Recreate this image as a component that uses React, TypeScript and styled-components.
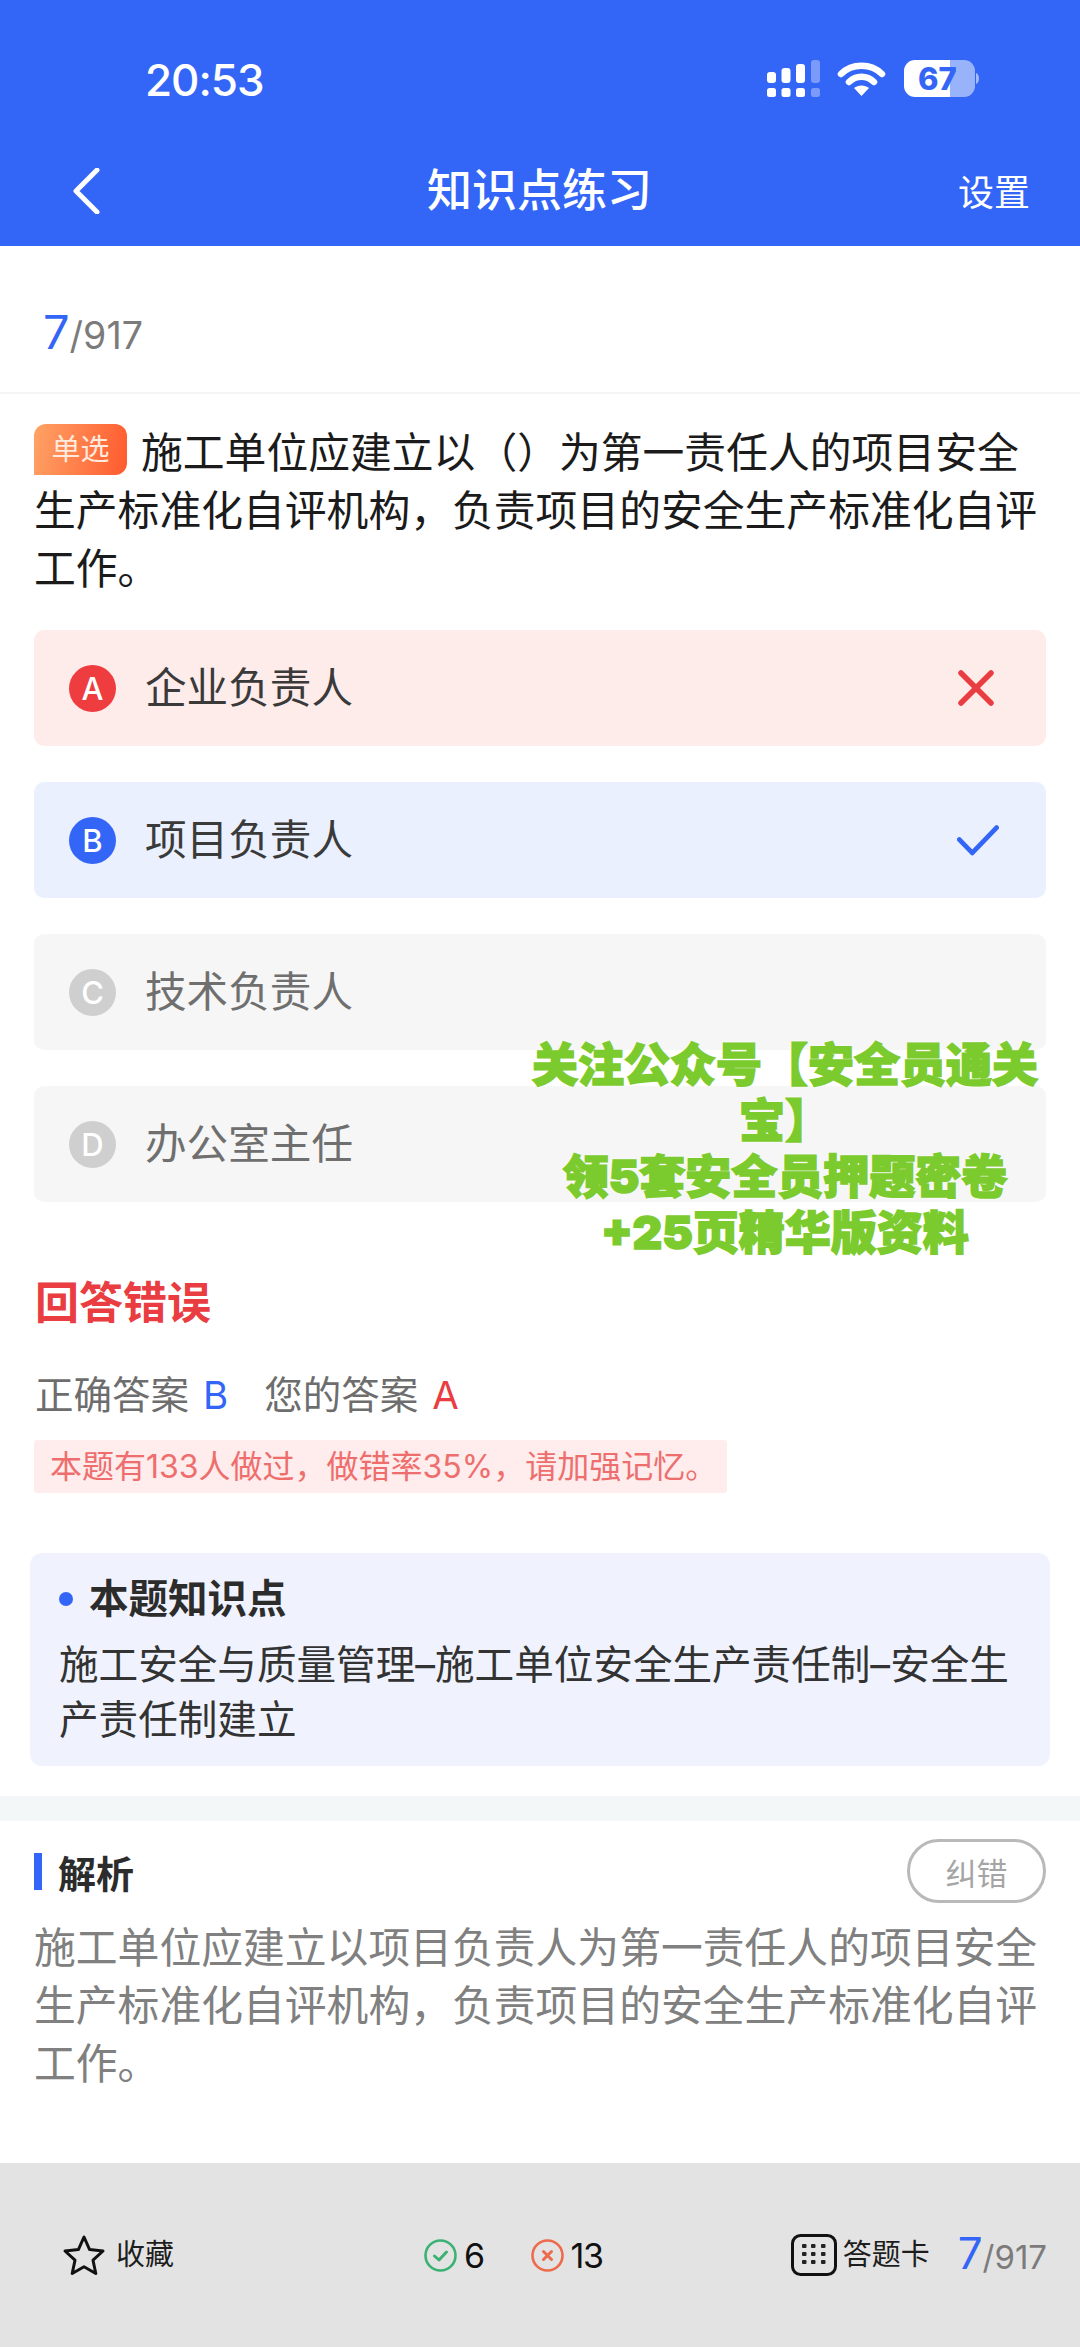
import React from "react";
import styled, { createGlobalStyle } from "styled-components";

const FONT = `Inter, "Noto Sans CJK SC", sans-serif`;
const BLUE = "#3366f6";
const RED = "#e93d41";

const Global = createGlobalStyle`
  html, body { margin: 0; padding: 0; background: #fff; }
  body { font-family: ${FONT}; text-spacing-trim: space-all; }
  * { box-sizing: border-box; }
`;

const Page = styled.div`
  position: relative;
  width: 1080px;
  height: 2347px;
  overflow: hidden;
  display: flex;
  flex-direction: column;
  background: #fff;
`;

const Header = styled.header`
  height: 246px;
  padding-top: 40px;
  background: ${BLUE};
  color: #fff;
`;

const StatusBar = styled.div`
  height: 80px;
  margin-bottom: 21px;
  padding-left: 145px;
  display: flex;
  align-items: center;
`;

const Clock = styled.div`
  width: 622px;
  font-size: 44px;
  font-weight: 500;
  letter-spacing: -1px;
  line-height: 80px;
`;

const StatusIcons = styled.svg`
  display: block;
  width: 213px;
  height: 50px;
  flex: none;
`;

const BatteryText = styled.text`
  font-family: ${FONT};
  font-size: 31px;
  font-weight: 800;
  fill: ${BLUE};
`;

const Nav = styled.nav`
  height: 100px;
  padding: 0 50px 0 72px;
  display: flex;
  align-items: center;
`;

const BackIcon = styled.svg`
  width: 28px;
  height: 46px;
  flex: none;
`;

const NavTitle = styled.h1`
  width: 224px;
  margin: 0 0 0 327px;
  font-size: 45px;
  font-weight: 500;
  line-height: 60px;
  white-space: nowrap;
`;

const NavAction = styled.div`
  margin-left: auto;
  font-size: 36px;
  line-height: 60px;
  position: relative;
  top: 2px;
`;

const CounterRow = styled.div`
  height: 148px;
  padding: 56px 0 0 43px;
  border-bottom: 2px solid #f4f5f6;
`;

const Counter = styled.div<{ $size: number; $cur: number }>`
  display: inline-flex;
  align-items: baseline;
  color: #7b7b7b;
  font-size: ${(p) => p.$size}px;
  line-height: 60px;
  b {
    font-weight: 400;
    font-size: ${(p) => p.$cur}px;
    color: ${BLUE};
  }
`;

const Question = styled.div`
  margin: 30px 34px 0;
  font-size: 41.8px;
  line-height: 58px;
  color: #1b1b1b;
`;

const Tag = styled.span`
  display: inline-block;
  width: 93px;
  height: 51px;
  margin-right: 14px;
  border-radius: 12px 12px 12px 0;
  background: linear-gradient(100deg, #ffa366, #ff5a2e);
  color: #ffeadd;
  font-size: 29px;
  line-height: 51px;
  text-align: center;
  vertical-align: 8px;
`;

const Options = styled.div`
  margin: 32px 34px 0;
  display: flex;
  flex-direction: column;
  gap: 36px;
`;

type Tone = "wrong" | "right" | "idle";
const optionBg = { wrong: "#feeceb", right: "#ebf0fe", idle: "#f6f6f6" };
const optionDot = { wrong: "#ee3c3f", right: BLUE, idle: "#cfcfcf" };
const optionText = { wrong: "#3a3a3a", right: "#3a3a3a", idle: "#6f6f6f" };

const Option = styled.div<{ $tone: Tone }>`
  height: 116px;
  padding: 0 47px 0 35px;
  display: flex;
  align-items: center;
  border-radius: 10px;
  background: ${(p) => optionBg[p.$tone]};
  color: ${(p) => optionText[p.$tone]};
`;

const OptionDot = styled.span<{ $tone: Tone }>`
  width: 47px;
  height: 47px;
  flex: none;
  border-radius: 50%;
  background: ${(p) => optionDot[p.$tone]};
  color: #fff;
  font-size: 31px;
  font-weight: 500;
  line-height: 47px;
  text-align: center;
`;

const OptionLabel = styled.span`
  flex: 1;
  margin-left: 29px;
  font-size: 41.6px;
  line-height: 58px;
`;

const WrongMark = styled.svg`
  width: 36px;
  height: 36px;
  margin-right: 5px;
`;

const RightMark = styled.svg`
  width: 42px;
  height: 31px;
`;

const ResultTitle = styled.div`
  margin: 72px 35px 0;
  color: ${RED};
  font-size: 44px;
  font-weight: 700;
  line-height: 58px;
`;

const AnswerRow = styled.div`
  margin: 36px 35px 0;
  display: flex;
  color: #6d6d6d;
  font-size: 38.5px;
  line-height: 54px;
`;

const AnswerPart = styled.span`
  margin-right: 36px;
`;

const AnswerLetter = styled.span<{ $color: string }>`
  margin-left: 14px;
  color: ${(p) => p.$color};
`;

const StatBand = styled.div`
  width: 693px;
  height: 53px;
  margin: 18px 0 0 34px;
  padding-left: 16px;
  background: #ffecec;
  color: #ee6e6e;
  font-size: 32px;
  line-height: 53px;
  white-space: nowrap;
  border-radius: 3px;
`;

const KnowledgeCard = styled.section`
  height: 213px;
  margin: 60px 30px 0;
  padding: 20px 29px 0;
  border-radius: 12px;
  background: #f0f3fe;
`;

const KnowledgeTitle = styled.div`
  display: flex;
  align-items: center;
  color: #2c2c2c;
  font-size: 39.5px;
  font-weight: 700;
  line-height: 52px;
`;

const Dot = styled.span`
  width: 14px;
  height: 14px;
  margin-right: 16px;
  border-radius: 50%;
  background: ${BLUE};
`;

const KnowledgeBody = styled.div`
  margin-top: 13px;
  color: #333;
  font-size: 39.6px;
  line-height: 55px;
`;

const SectionGap = styled.div`
  height: 25px;
  margin-top: 30px;
  background: #f4f7f7;
`;

const Analysis = styled.section`
  flex: 1;
  padding: 18px 34px 0;
`;

const AnalysisHead = styled.div`
  height: 64px;
  display: flex;
  align-items: center;
  justify-content: space-between;
`;

const AnalysisTitle = styled.div`
  height: 37px;
  padding-left: 16px;
  display: flex;
  align-items: center;
  border-left: 8px solid ${BLUE};
  color: #2c2c2c;
  font-size: 38px;
  font-weight: 700;
`;

const ReportButton = styled.button`
  width: 139px;
  height: 64px;
  padding: 0;
  border: 3px solid #b9b9b9;
  border-radius: 32px;
  background: transparent;
  color: #a5a5a5;
  font-family: ${FONT};
  font-size: 31px;
`;

const AnalysisBody = styled.div`
  margin-top: 16px;
  color: #808080;
  font-size: 41.8px;
  line-height: 58px;
`;

const Footer = styled.footer`
  height: 184px;
  padding: 0 33px 0 62px;
  display: flex;
  align-items: center;
  background: #e3e3e3;
`;

const FooterLeft = styled.div`
  width: 362px;
  display: flex;
  align-items: center;
  gap: 10px;
`;

const FooterMid = styled.div`
  flex: 1;
  display: flex;
  align-items: center;
`;

const FooterRight = styled.div`
  display: flex;
  align-items: center;
`;

const FooterText = styled.span`
  color: #1d1d1d;
  font-size: 29px;
  line-height: 44px;
  white-space: nowrap;
`;

const CardLabel = styled(FooterText)`
  margin-left: 6px;
`;

const Stat = styled.span<{ $gap?: number }>`
  display: flex;
  align-items: center;
  gap: 7px;
  margin-right: ${(p) => p.$gap ?? 0}px;
  color: #111;
  font-size: 34px;
  letter-spacing: -1.5px;
`;

const FooterCounter = styled.div`
  margin-left: 28px;
`;

const Promo = styled.div`
  position: absolute;
  left: 520px;
  top: 1036px;
  width: 530px;
  text-align: center;
  color: #7ccb2e;
  font-size: 46px;
  font-weight: 900;
  line-height: 56px;
  -webkit-text-stroke: 1.6px #7ccb2e;
  text-shadow: 0 0 3px #fff, 0 0 3px #fff;
`;

const Signal = () => (
  <>
    {[0, 14.5, 29].map((x, i) => (
      <g key={x}>
        <rect x={x} y={12 - i * 4} width="9" height={11 + i * 4} rx="3" fill="#fff" />
        <rect x={x} y="28" width="9" height="9" rx="2.5" fill="#fff" />
      </g>
    ))}
    <rect x="44" y="0" width="9" height="23" rx="3" fill="#fff" opacity=".35" />
    <rect x="44" y="28" width="9" height="9" rx="2.5" fill="#fff" opacity=".35" />
  </>
);

const App = () => (
  <Page>
    <Global />
    <Header>
      <StatusBar>
        <Clock>20:53</Clock>
        <StatusIcons viewBox="0 0 213 50">
          <g transform="translate(0 5)">
            <Signal />
          </g>
          <g transform="translate(71 7)" fill="none" stroke="#fff" strokeLinecap="round">
            <path d="M3 12 C14 1 33 1 44 12" strokeWidth="6.5" />
            <path d="M11 20 C18 13 29 13 36 20" strokeWidth="6.5" />
            <path d="M23.5 34 L16 26 C20 22.5 27 22.5 31 26 Z" fill="#fff" stroke="none" />
          </g>
          <path d="M183 5 H197 A11 11 0 0 1 208 16 V31 A11 11 0 0 1 197 42 H183 Z" fill="#fff" opacity=".5" />
          <path d="M148 5 H183 V42 H148 A11 11 0 0 1 137 31 V16 A11 11 0 0 1 148 5 Z" fill="#fff" />
          <path d="M209 18 C213 19 213 28 209 29 Z" fill="#fff" opacity=".55" />
          <BatteryText x="151" y="35">67</BatteryText>
        </StatusIcons>
      </StatusBar>
      <Nav>
        <BackIcon viewBox="0 0 28 46">
          <path d="M25 2 L4 23 L25 44" fill="none" stroke="#fff" strokeWidth="5" strokeLinecap="round" strokeLinejoin="round" />
        </BackIcon>
        <NavTitle>知识点练习</NavTitle>
        <NavAction>设置</NavAction>
      </Nav>
    </Header>

    <CounterRow>
      <Counter $size={37.5} $cur={47}>
        <b>7</b>/917
      </Counter>
    </CounterRow>

    <Question>
      <Tag>单选</Tag>
      施工单位应建立以（）为第一责任人的项目安全生产标准化自评机构，负责项目的安全生产标准化自评工作。
    </Question>

    <Options>
      <Option $tone="wrong">
        <OptionDot $tone="wrong">A</OptionDot>
        <OptionLabel>企业负责人</OptionLabel>
        <WrongMark viewBox="0 0 36 36">
          <path d="M3 3 L33 33 M33 3 L3 33" stroke={RED} strokeWidth="5.5" strokeLinecap="round" />
        </WrongMark>
      </Option>
      <Option $tone="right">
        <OptionDot $tone="right">B</OptionDot>
        <OptionLabel>项目负责人</OptionLabel>
        <RightMark viewBox="0 0 44 32">
          <path d="M2.5 15 L16 29 L41.5 2.5" fill="none" stroke={BLUE} strokeWidth="5" strokeLinecap="round" strokeLinejoin="round" />
        </RightMark>
      </Option>
      <Option $tone="idle">
        <OptionDot $tone="idle">C</OptionDot>
        <OptionLabel>技术负责人</OptionLabel>
      </Option>
      <Option $tone="idle">
        <OptionDot $tone="idle">D</OptionDot>
        <OptionLabel>办公室主任</OptionLabel>
      </Option>
    </Options>

    <ResultTitle>回答错误</ResultTitle>
    <AnswerRow>
      <AnswerPart>
        正确答案<AnswerLetter $color={BLUE}>B</AnswerLetter>
      </AnswerPart>
      <AnswerPart>
        您的答案<AnswerLetter $color={RED}>A</AnswerLetter>
      </AnswerPart>
    </AnswerRow>
    <StatBand>本题有133人做过，做错率35%，请加强记忆。</StatBand>

    <KnowledgeCard>
      <KnowledgeTitle>
        <Dot />
        本题知识点
      </KnowledgeTitle>
      <KnowledgeBody>施工安全与质量管理–施工单位安全生产责任制–安全生产责任制建立</KnowledgeBody>
    </KnowledgeCard>

    <SectionGap />

    <Analysis>
      <AnalysisHead>
        <AnalysisTitle>解析</AnalysisTitle>
        <ReportButton>纠错</ReportButton>
      </AnalysisHead>
      <AnalysisBody>施工单位应建立以项目负责人为第一责任人的项目安全生产标准化自评机构，负责项目的安全生产标准化自评工作。</AnalysisBody>
    </Analysis>

    <Footer>
      <FooterLeft>
        <svg width="44" height="42" viewBox="0 0 44 42">
          <path
            d="M22 3 L27.6 15.6 L41 17 L31 26.2 L33.8 39.5 L22 32.8 L10.2 39.5 L13 26.2 L3 17 L16.4 15.6 Z"
            fill="none"
            stroke="#111"
            strokeWidth="3"
            strokeLinejoin="round"
          />
        </svg>
        <FooterText>收藏</FooterText>
      </FooterLeft>
      <FooterMid>
        <Stat $gap={47}>
          <svg width="33" height="33" viewBox="0 0 33 33" fill="none" stroke="#3bb273" strokeWidth="2.6" strokeLinecap="round" strokeLinejoin="round">
            <circle cx="16.5" cy="16.5" r="15" />
            <path d="M10.5 17 L15 21 L22.5 13" strokeWidth="3" />
          </svg>
          6
        </Stat>
        <Stat>
          <svg width="33" height="33" viewBox="0 0 33 33" fill="none" stroke="#ee6a4c" strokeWidth="2.6" strokeLinecap="round">
            <circle cx="16.5" cy="16.5" r="15" />
            <path d="M12.5 12.5 L20.5 20.5 M20.5 12.5 L12.5 20.5" strokeWidth="3" />
          </svg>
          13
        </Stat>
      </FooterMid>
      <FooterRight>
        <svg width="46" height="42" viewBox="0 0 46 42">
          <rect x="1.5" y="1.5" width="43" height="39" rx="8" fill="none" stroke="#111" strokeWidth="3" />
          {[13, 22, 32].map((x) =>
            [12, 20, 28].map((y) => <rect key={`${x}-${y}`} x={x - 2} y={y - 2} width="4.5" height="4" rx="1" fill="#222" />)
          )}
        </svg>
        <CardLabel>答题卡</CardLabel>
        <FooterCounter>
          <Counter $size={33} $cur={44}>
            <b>7</b>/917
          </Counter>
        </FooterCounter>
      </FooterRight>
    </Footer>

    <Promo>
      关注公众号【安全员通关宝】
      <br />
      领5套安全员押题密卷
      <br />
      +25页精华版资料
    </Promo>
  </Page>
);

export default App;
